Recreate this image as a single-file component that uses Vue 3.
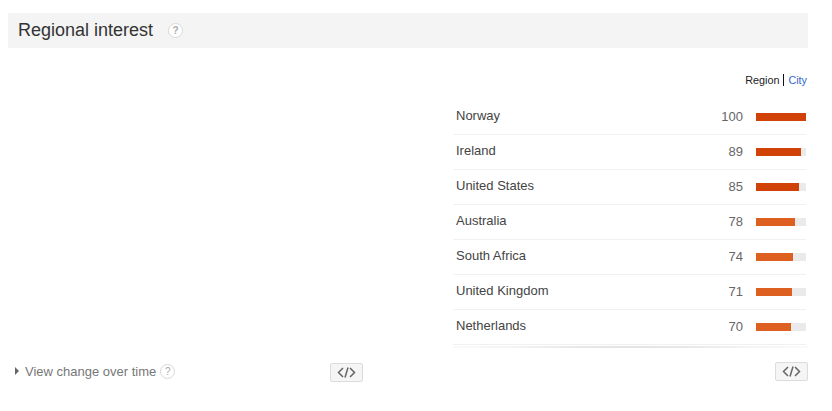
<script setup>
const rows = [
  { name: 'Norway', value: 100, dark: true },
  { name: 'Ireland', value: 89, dark: true },
  { name: 'United States', value: 85, dark: true },
  { name: 'Australia', value: 78, dark: false },
  { name: 'South Africa', value: 74, dark: false },
  { name: 'United Kingdom', value: 71, dark: false },
  { name: 'Netherlands', value: 70, dark: false },
]
</script>

<template>
  <div class="page">
    <header class="head">
      <h2 class="title">Regional interest</h2>
      <span class="help help-lg">?</span>
    </header>
    <div class="body">
      <div class="left">
        <div class="foot">
          <div class="change">
            <span class="tri"></span>
            <span class="change-text">View change over time</span>
            <span class="help help-sm">?</span>
          </div>
          <button class="embed">
            <svg width="19" height="11" viewBox="0 0 19 11" fill="none" stroke="#666" stroke-width="1.5"><path d="M6 1 1.500 5.500 6 10M13 1l4.500 4.500L13 10M11 .5l-3 10"/></svg>
          </button>
        </div>
      </div>
      <div class="right">
        <div class="switch"><span class="on">Region</span><span class="sep"></span><span class="link">City</span></div>
        <ul class="list">
          <li v-for="r in rows" :key="r.name" class="row">
            <span class="name">{{ r.name }}</span>
            <span class="val">{{ r.value }}</span>
            <span class="track"><span class="fill" :class="{ dark: r.dark }" :style="{ width: r.value + '%' }"></span></span>
          </li>
        </ul>
        <div class="shadow"></div>
        <div class="foot-r">
          <button class="embed">
            <svg width="19" height="11" viewBox="0 0 19 11" fill="none" stroke="#666" stroke-width="1.5"><path d="M6 1 1.500 5.500 6 10M13 1l4.500 4.500L13 10M11 .5l-3 10"/></svg>
          </button>
        </div>
      </div>
    </div>
  </div>
</template>

<style>
html, body { margin: 0; background: #fff; }
</style>

<style scoped>
.page { width: 832px; height: 411px; padding: 13px 24px 0 8px; box-sizing: border-box; font-family: "Liberation Sans", Arial, sans-serif; overflow: hidden; }
.head { height: 35px; background: #f4f4f4; display: flex; align-items: center; padding-left: 10px; }
.title { margin: 0; font-size: 18px; font-weight: 400; color: #333; }
.help { display: inline-flex; align-items: center; justify-content: center; border-radius: 50%; border: 1px solid #d8d8d8; background: #fff; color: #aaa; box-sizing: border-box; font-weight: 700; }
.help-lg { width: 15px; height: 15px; font-size: 10px; margin-left: 15px; }
.help-sm { width: 15px; height: 15px; font-size: 10px; margin-left: 4px; font-weight: 400; }
.body { display: flex; height: 340px; }
.left { width: 355px; display: flex; flex-direction: column; justify-content: flex-end; }
.foot { display: flex; justify-content: space-between; align-items: center; height: 20px; margin-bottom: 6px; padding-left: 7px; }
.change { display: flex; align-items: center; color: #777; font-size: 13px; position: relative; top: -1px; }
.tri { width: 0; height: 0; border-left: 4px solid #666; border-top: 4px solid transparent; border-bottom: 4px solid transparent; margin-right: 6px; }
.change-text { font-size: 13px; color: #777; }
.embed { width: 33px; height: 19px; padding: 0; display: flex; align-items: center; justify-content: center; background: #f5f5f5; border: 1px solid #dcdcdc; border-radius: 2px; }
.right { margin-left: 90px; width: 355px; }
.switch { display: flex; justify-content: flex-end; align-items: center; height: 12px; margin: 26px 1px 0 0; font-size: 10.8px; color: #222; }
.sep { width: 1px; height: 12px; background: #111; margin: 0 4px 0 4px; }
.link { color: #36c; }
.list { list-style: none; margin: 14px 0 0; padding: 0; width: 353px; }
.row { height: 34px; border-bottom: 1px solid #f0f0f5; display: flex; align-items: center; color: #444; padding-left: 3px; }
.name { flex: 1; position: relative; top: -2px; font-size: 13px; }
.val { font-size: 13px; color: #666; margin-right: 13px; position: relative; top: -1px; }
.track { width: 50px; height: 8px; background: #eaeaea; display: block; }
.fill { display: block; height: 100%; background: #dd6020; }
.fill.dark { background: #d14208; }
.shadow { height: 2px; width: 355px; margin-top: 1px; background: radial-gradient(ellipse at center, #ccc 0, rgba(204,204,204,0.2) 60%, rgba(204,204,204,0) 100%); }
.foot-r { display: flex; justify-content: flex-end; margin-top: 14px; }
</style>
